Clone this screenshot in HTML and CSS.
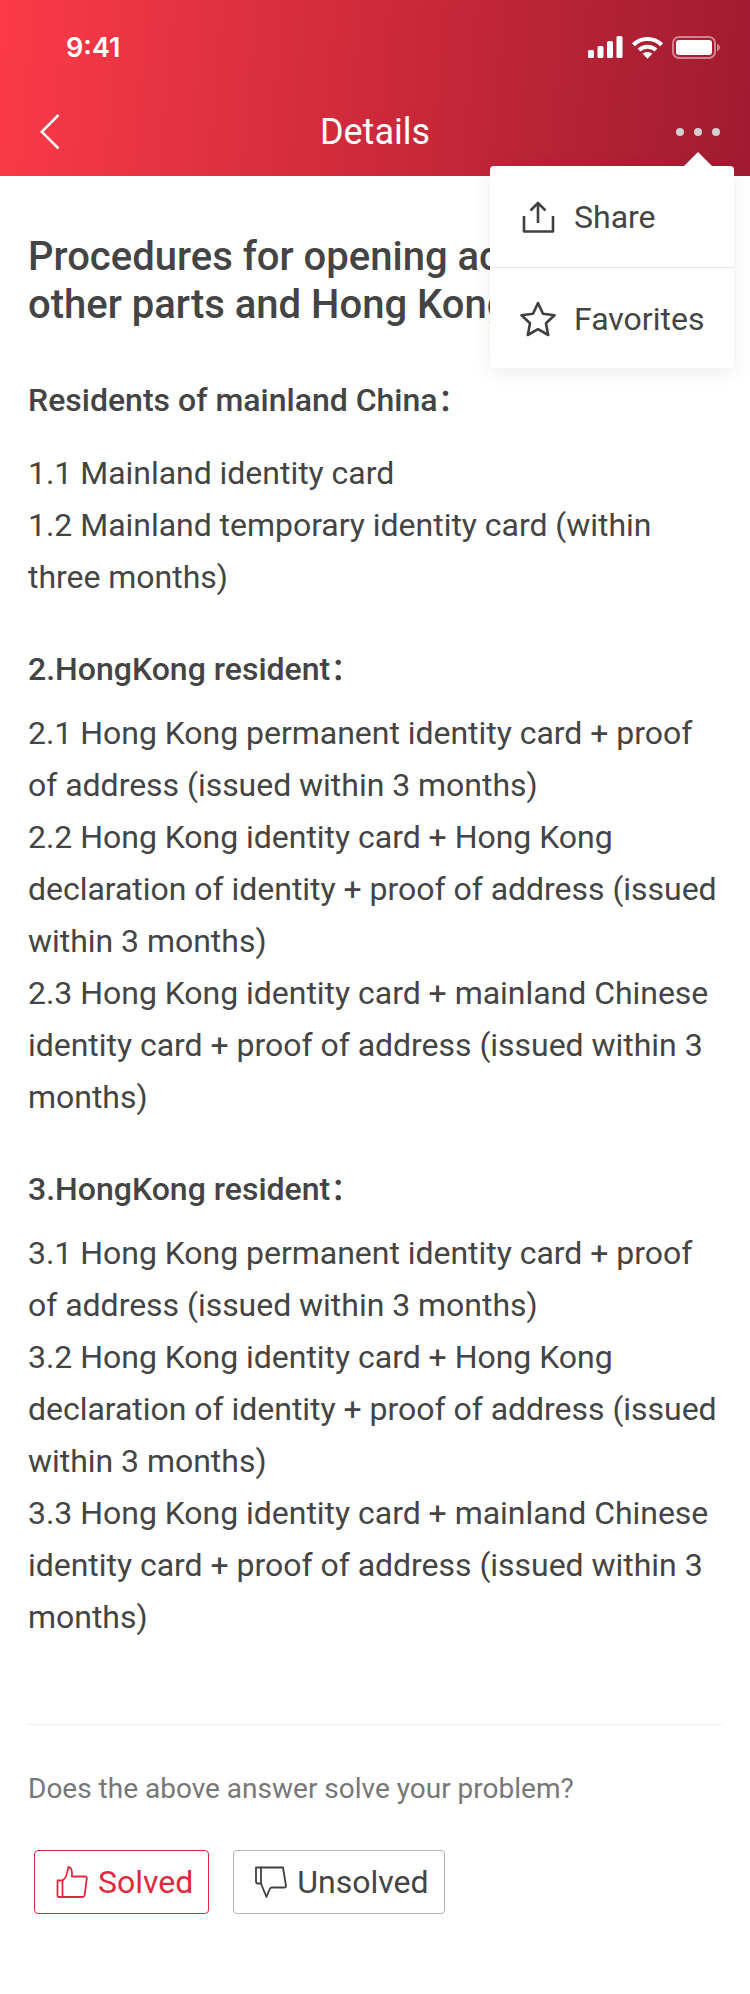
FILE: index.html
```html
<!DOCTYPE html>
<html lang="en">
<head>
    <meta charset="UTF-8">
    <meta name="viewport" content="width=device-width, initial-scale=1.0">
    <title>Details</title>
    <link rel="stylesheet" href="styles.css">
</head>
<body>
    <div class="page">
        <header class="header">
            <div class="status-bar">
                <span class="time">9:41</span>
                <div class="status-icons">
                    <svg width="35" height="22" viewBox="0 0 35 22" fill="#fff">
                        <rect x="0" y="14" width="6" height="8" rx="1.5"/>
                        <rect x="9.5" y="10" width="6" height="12" rx="1.5"/>
                        <rect x="19" y="5" width="6" height="17" rx="1.5"/>
                        <rect x="28.5" y="0" width="6" height="22" rx="1.5"/>
                    </svg>
                    <svg class="wifi" width="31" height="23" viewBox="0 0 31 23" fill="none" stroke="#fff" stroke-width="4">
                        <path d="M1.400 8.800C9.200 1 21.800 1 29.600 8.800"/>
                        <path d="M7 14C11.700 9.500 19.300 9.500 24 14"/>
                        <path d="M10.500 17.600L15.500 22.800L20.500 17.600C17.700 15.400 13.300 15.400 10.500 17.600Z" fill="#fff" stroke="none"/>
                    </svg>
                    <svg width="48" height="23" viewBox="0 0 48 23" fill="none">
                        <rect x="1" y="1" width="42" height="21" rx="6" stroke="#fff" stroke-opacity="0.45" stroke-width="2"/>
                        <rect x="4" y="4" width="36" height="15" rx="3" fill="#fff"/>
                        <path d="M45 8C47 8.500 48 10 48 11.500C48 13 47 14.500 45 15Z" fill="#fff" fill-opacity="0.45"/>
                    </svg>
                </div>
            </div>
            <nav class="nav-bar">
                <svg class="back" width="20" height="36" viewBox="0 0 20 36" fill="none" stroke="#fff" stroke-width="2.6">
                    <path d="M18.500 1L1.800 17.800L18.500 34.500"/>
                </svg>
                <span class="nav-title">Details</span>
                <div class="more">
                    <span class="dot"></span>
                    <span class="dot"></span>
                    <span class="dot"></span>
                </div>
            </nav>
        </header>

        <div class="menu">
            <div class="menu-item">
                <svg width="36" height="36" viewBox="0 0 36 36" fill="none" stroke="#404040" stroke-width="2.6" stroke-linejoin="round">
                    <path d="M18 24V5"/>
                    <path d="M10.500 11.500L18 4L25.500 11.500"/>
                    <path d="M4 17V32.500H33V17"/>
                </svg>
                <span>Share</span>
            </div>
            <div class="menu-item">
                <svg width="36" height="36" viewBox="0 0 36 36" fill="none" stroke="#404040" stroke-width="2.6" stroke-linejoin="round">
                    <path d="M18 2L23 12.800L34.500 14.300L26 22.300L28.200 34L18 28.200L7.800 34L10 22.300L1.500 14.300L13 12.800Z"/>
                </svg>
                <span>Favorites</span>
            </div>
        </div>

        <main class="content">
            <h1 class="title">Procedures for opening accounts in other parts and Hong Kong</h1>

            <h2 class="first">Residents of mainland China：</h2>
            <p class="first-text">1.1 Mainland identity card<br>
            1.2 Mainland temporary identity card (within three months)</p>

            <h2>2.HongKong resident：</h2>
            <p>2.1 Hong Kong permanent identity card + proof of address (issued within 3 months)<br>
            2.2 Hong Kong identity card + Hong Kong declaration of identity + proof of address (issued within 3 months)<br>
            2.3 Hong Kong identity card + mainland Chinese identity card + proof of address (issued within 3 months)</p>

            <h2>3.HongKong resident：</h2>
            <p>3.1 Hong Kong permanent identity card + proof of address (issued within 3 months)<br>
            3.2 Hong Kong identity card + Hong Kong declaration of identity + proof of address (issued within 3 months)<br>
            3.3 Hong Kong identity card + mainland Chinese identity card + proof of address (issued within 3 months)</p>

            <div class="feedback">
                <div class="question">Does the above answer solve your problem?</div>
                <div class="buttons">
                    <button class="btn btn-solved">
                        <svg width="32" height="32" viewBox="0 0 32 32" fill="none" stroke="#e0293f" stroke-width="1.800" stroke-linejoin="round">
                            <path d="M1.500 14.500H6.500V31H3C2 31 1.500 30.500 1.500 29.500Z"/>
                            <path d="M6.500 14.500C10 12.500 11.500 7 12.300 1C15.500 1.500 16.500 5 15.800 10.500H29C30.300 10.500 31 11.300 30.800 12.500L28.600 29C28.400 30.300 27.600 31 26.500 31H6.500"/>
                        </svg>
                        <span>Solved</span>
                    </button>
                    <button class="btn">
                        <svg width="32" height="32" viewBox="0 0 32 32" fill="none" stroke="#404040" stroke-width="1.800" stroke-linejoin="round">
                            <path d="M1 1.500H6V17.500H3C1.800 17.500 1 16.800 1 15.500Z"/>
                            <path d="M6 1.500H28L31 20C31 21 30.500 21.500 29.500 21.500H17C15.500 21.500 15 22 14.500 23.500L11.500 31L8 22.500L6 17.500"/>
                        </svg>
                        <span>Unsolved</span>
                    </button>
                </div>
            </div>
        </main>
    </div>
</body>
</html>
```

FILE: styles.css
```css
* {
    box-sizing: border-box;
}

body {
    margin: 0;
    padding: 0;
    font-family: Roboto, "Noto Sans CJK SC", Arial, sans-serif;
    background-color: #ffffff;
    color: #444444;
}

.page {
    position: relative;
    width: 750px;
    height: 1994px;
    overflow: hidden;
}

.header {
    height: 176px;
    background: linear-gradient(95deg, #fb3a47 0%, #cd2a3b 50%, #a01b30 100%);
    color: #ffffff;
}

.status-bar {
    height: 94px;
    padding: 0 30px 0 66px;
    display: flex;
    justify-content: space-between;
    align-items: center;
}

.time {
    font-family: Inter, Arial, sans-serif;
    font-size: 27px;
    font-weight: 600;
}

.status-icons {
    display: flex;
    align-items: center;
    gap: 9px;
}

.nav-bar {
    height: 76px;
    padding: 0 30px 0 40px;
    display: flex;
    justify-content: space-between;
    align-items: center;
    position: relative;
}

.back {
    display: block;
}

.nav-title {
    position: absolute;
    left: 0;
    right: 0;
    text-align: center;
    font-size: 36px;
}

.more {
    display: flex;
    gap: 10px;
}

.dot {
    width: 8px;
    height: 8px;
    border-radius: 50%;
    background-color: #d0d0d0;
}

.menu {
    position: absolute;
    top: 166px;
    left: 490px;
    width: 244px;
    height: 202px;
    background-color: #ffffff;
    border-radius: 4px;
    box-shadow: 0 4px 20px rgba(0, 0, 0, 0.08);
}

.menu::before {
    content: "";
    position: absolute;
    top: -14px;
    left: 194px;
    width: 28px;
    height: 14px;
    background-color: #ffffff;
    clip-path: polygon(50% 0, 100% 100%, 0 100%);
}

.menu-item {
    height: 101px;
    padding-left: 30px;
    display: flex;
    align-items: center;
    gap: 18px;
    font-size: 32px;
}

.menu-item + .menu-item {
    border-top: 1px solid #e8e8e8;
    padding-top: 2px;
}

.content {
    padding: 57px 28px 0;
}

.title {
    margin: 0;
    font-size: 40px;
    font-weight: 500;
    line-height: 48px;
}

h2 {
    margin: 40px 0 0;
    font-size: 32px;
    font-weight: 500;
    line-height: 52px;
}

h2.first {
    margin-top: 0;
    padding-top: 45px;
}

p {
    margin: 0;
    padding-top: 12px;
    font-size: 32px;
    line-height: 52px;
    letter-spacing: -0.03px;
}

p.first-text {
    padding-top: 21px;
}

.feedback {
    margin-top: 81px;
    padding-top: 44px;
    border-top: 1px solid #eeeeee;
}

.question {
    font-size: 28px;
    line-height: 40px;
    color: #777777;
}

.buttons {
    margin-top: 41px;
    padding-left: 6px;
    display: flex;
    gap: 24px;
}

.btn {
    height: 64px;
    padding: 0 15px 0 21px;
    display: flex;
    align-items: center;
    gap: 10px;
    background-color: #ffffff;
    border: 1px solid #b4b4b4;
    border-radius: 4px;
    font-family: Roboto, Arial, sans-serif;
    font-size: 32px;
    color: #444444;
}

.btn-solved {
    border-color: #e0293f;
    color: #e0293f;
}
```
